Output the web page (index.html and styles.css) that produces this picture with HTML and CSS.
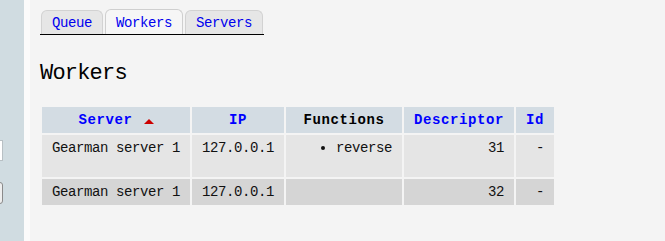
FILE: index.html
```html
<!DOCTYPE html>
<html>
<head>
<meta charset="utf-8">
<link rel="stylesheet" href="styles.css">
</head>
<body>
<div class="sidebar">
  <input class="side-input" type="text" aria-label="search">
  <button class="side-btn" aria-label="go"></button>
</div>
<div class="divider"></div>
<div class="main">
  <div class="tabs">
    <a class="tab" href="#">Queue</a>
    <a class="tab active" href="#">Workers</a>
    <a class="tab" href="#">Servers</a>
  </div>
  <h1 class="title">Workers</h1>
  <table class="grid">
    <thead>
      <tr>
        <th class="c-server"><a href="#">Server</a> <svg class="sort" width="10" height="5" viewBox="0 0 10 5"><polygon points="0,5 10,5 5,0" fill="#cc0000"/></svg></th>
        <th class="c-ip"><a href="#">IP</a></th>
        <th class="c-fn">Functions</th>
        <th class="c-desc"><a href="#">Descriptor</a></th>
        <th class="c-id"><a href="#">Id</a></th>
      </tr>
    </thead>
    <tbody>
      <tr class="odd">
        <td class="l">Gearman server 1</td>
        <td class="m">127.0.0.1</td>
        <td class="fn"><ul class="fnlist"><li>reverse</li></ul></td>
        <td class="r">31</td>
        <td class="r">-</td>
      </tr>
      <tr class="even">
        <td class="l">Gearman server 1</td>
        <td class="m">127.0.0.1</td>
        <td class="fn"></td>
        <td class="r">32</td>
        <td class="r">-</td>
      </tr>
    </tbody>
  </table>
</div>
</body>
</html>
```

FILE: styles.css
```css
html, body {
  margin: 0;
  padding: 0;
  height: 100%;
}
body {
  display: flex;
  background: #f4f4f4;
  font-family: "Liberation Mono", monospace;
  font-size: 14px;
  letter-spacing: -0.4px;
  color: #111;
  overflow: hidden;
}
.sidebar {
  width: 24px;
  flex: none;
  background: #d0dce1;
  overflow: hidden;
  padding-top: 140px;
  display: flex;
  flex-direction: column;
  align-items: flex-end;
  box-sizing: border-box;
}
.side-input {
  width: 200px;
  height: 21px;
  box-sizing: border-box;
  margin: 0 21px 0 0;
  border: 1px solid #b8c0c4;
  background: #fff;
  flex: none;
}
.side-btn {
  width: 60px;
  height: 22px;
  margin: 21px 21px 0 0;
  box-sizing: border-box;
  border: 1px solid #8a8a8a;
  border-radius: 3px;
  background: #eee;
  flex: none;
}
.divider {
  width: 6px;
  flex: none;
  background: #fbfbfb;
}
.main {
  flex: 1;
  background: #f4f4f4;
  padding: 9px 10px 0 10px;
}
.tabs {
  display: inline-flex;
  align-items: flex-end;
  gap: 2px;
  padding: 0 1px;
  height: 25px;
  border-bottom: 1px solid #000;
}
.tab {
  display: block;
  color: #0000ee;
  text-decoration: none;
  line-height: 16px;
  padding: 4px 10px 3px 10px;
  border: 1px solid #d2d2d2;
  border-bottom: none;
  border-radius: 6px 6px 0 0;
  background: #e6e6e6;
}
.tab.active {
  padding-top: 5px;
  background: #f6f6f6;
  border-color: #cfcfcf;
}
.title {
  margin: 26px 0 18px 0;
  font-size: 22px;
  line-height: 26px;
  font-weight: normal;
  letter-spacing: -0.8px;
  color: #000;
}
.grid {
  border-spacing: 2px;
  border-collapse: separate;
}
.grid th, .grid td {
  box-sizing: border-box;
  padding: 5px 10px;
  line-height: 16px;
  vertical-align: top;
}
.grid th {
  background: #d3dce3;
  font-weight: bold;
  letter-spacing: 0.6px;
  text-align: center;
  color: #000;
  white-space: nowrap;
}
.grid th a {
  color: #0000ff;
  text-decoration: none;
}
.sort {
  margin-left: 2px;
}
.c-server { width: 148px; }
.c-ip { width: 92px; }
.c-fn { width: 116px; }
.c-desc { width: 110px; }
.c-id { width: 38px; }
.grid td { white-space: nowrap; }
.odd td { background: #e5e5e5; }
.even td { background: #d5d5d5; }
.l { text-align: left; }
.m { text-align: center; }
.r { text-align: right; }
.fnlist {
  margin: 0 0 16px 0;
  padding-left: 40px;
}
```
